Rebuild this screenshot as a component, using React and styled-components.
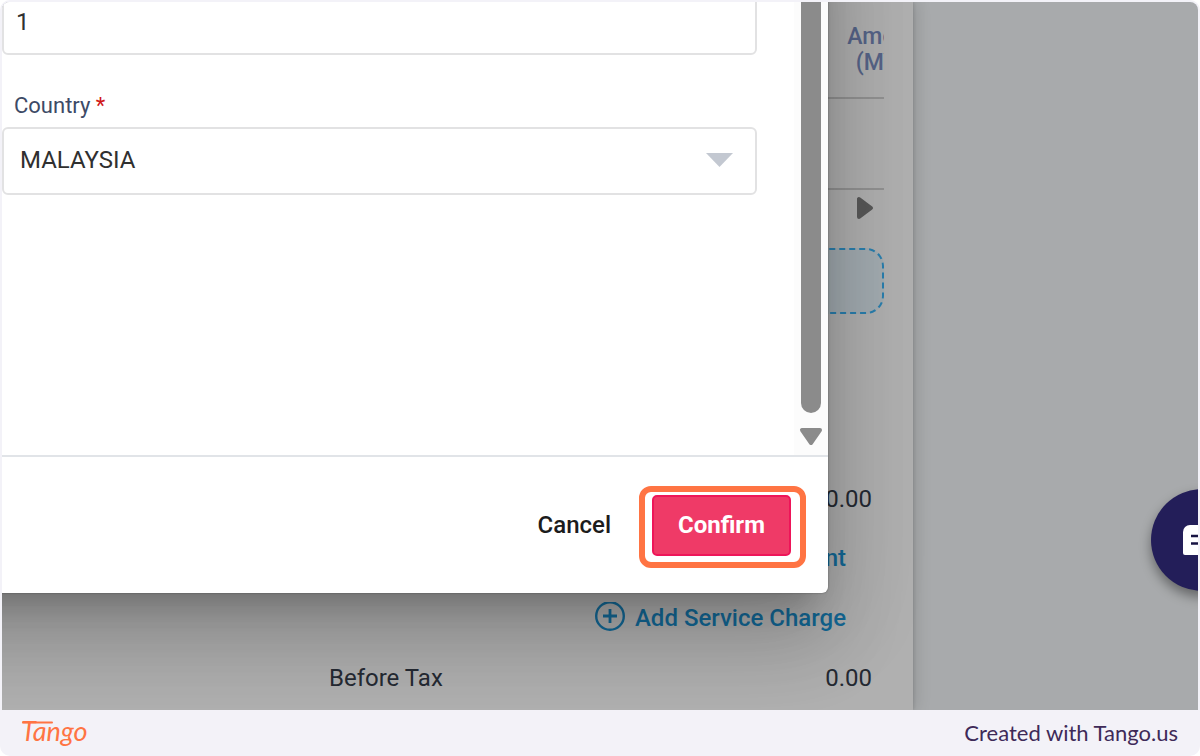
import React from 'react';
import styled, { createGlobalStyle } from 'styled-components';

const GlobalStyle = createGlobalStyle`
  *, *::before, *::after { box-sizing: border-box; }
  body { margin: 0; background: #fff; font-family: Roboto, "Liberation Sans", sans-serif; }
  button, input, select { font: inherit; }
`;

const Frame = styled.div`
  min-height: 100vh;
  display: flex;
  flex-direction: column;
  padding: 2px 2px 0;
  background: #f3f2f8;
  border-radius: 10px;
  overflow: hidden;
`;

const Scene = styled.main`
  position: relative;
  flex: 1;
  display: flex;
  background: #a8aaac;
  border-radius: 8px 8px 0 0;
  overflow: hidden;
`;

const Sheet = styled.section`
  flex: 1;
  min-width: 0;
  margin-right: 285px;
  padding: 0 29px 2px 31px;
  background: #b0b0b0;
  box-shadow: 1px 0 3px rgba(0, 0, 0, 0.12), 2px 0 16px rgba(0, 0, 0, 0.14);
`;

const TableClip = styled.div`
  overflow: hidden;
`;

const Items = styled.table`
  width: calc(100% + 59px);
  border-collapse: collapse;
  table-layout: fixed;
`;

const HeadCell = styled.th`
  width: ${(p) => (p.$narrow ? '110px' : 'auto')};
  height: 96px;
  padding: 0;
  border-bottom: 2px solid #929292;
  color: #566488;
  font-size: 23px;
  font-weight: 500;
  line-height: 26px;
`;

const BodyCell = styled.td`
  height: 91px;
  border-bottom: 2px solid #929292;
`;

const ScrollHint = styled.div`
  display: flex;
  justify-content: flex-end;
  align-items: center;
  height: 36px;
  padding-right: 10px;
`;

const AddLine = styled.div`
  height: 66px;
  margin: 22px 0 156px;
  border: 2px dashed #2a7fae;
  border-radius: 18px;
  background: #a3acb1;
`;

const TotalRow = styled.div`
  display: flex;
  justify-content: flex-end;
  align-items: center;
  height: ${(p) => (p.$first ? '58px' : '60px')};
  padding-right: ${(p) => (p.$action ? '38px' : '12px')};
  color: #252a33;
  font-size: 24px;
  line-height: 28px;
`;

const TotalLabel = styled.span`
  margin-right: auto;
  padding-left: 296px;
`;

const TextAction = styled.button`
  display: flex;
  align-items: center;
  gap: 10px;
  padding: 0;
  border: 0;
  background: none;
  color: #146a98;
  font-weight: 500;
`;

const Dialog = styled.section`
  position: absolute;
  top: -100px;
  left: -100px;
  right: 370px;
  padding: 100px 0 0 100px;
  background: #fff;
  border-radius: 6px;
  box-shadow:
    0 0 2px rgba(0, 0, 0, 0.4),
    0 22px 30px -14px rgba(0, 0, 0, 0.2),
    0 48px 76px 6px rgba(0, 0, 0, 0.14),
    0 18px 92px 16px rgba(0, 0, 0, 0.12);
`;

const DialogBody = styled.div`
  display: flex;
  height: 453px;
  overflow: hidden;
`;

const Fields = styled.div`
  flex: 1;
  min-width: 0;
  padding-right: 37px;
`;

const FieldInput = styled.input`
  display: block;
  width: 100%;
  height: 68px;
  margin-top: -15px;
  padding: 2px 12px 0;
  border: 2px solid #e2e2e3;
  border-radius: 6px;
  background: #fff;
  color: #303030;
  font-size: 24px;
`;

const FieldLabel = styled.label`
  display: block;
  margin: 37px 0 7px;
  padding-left: 12px;
  color: #3d4a66;
  font-size: 22px;
  line-height: 28px;
`;

const Required = styled.span`
  color: #d01818;
`;

const SelectBox = styled.div`
  position: relative;
`;

const FieldSelect = styled.select`
  display: block;
  appearance: none;
  width: 100%;
  height: 68px;
  padding: 0 48px 2px 16px;
  border: 2px solid #e2e2e3;
  border-radius: 6px;
  background: #fff;
  color: #303030;
  font-size: 24px;
`;

const Caret = styled.svg`
  position: absolute;
  top: 26px;
  right: 24px;
  pointer-events: none;
`;

const ScrollTrack = styled.div`
  display: flex;
  flex-direction: column;
  align-items: center;
  gap: 14px;
  width: 34px;
  padding-bottom: 9px;
  background: #fcfcfc;
`;

const ScrollThumb = styled.div`
  flex: 1;
  width: 20px;
  border-radius: 0 0 10px 10px;
  background: #8b8b8b;
`;

const DialogActions = styled.footer`
  display: flex;
  justify-content: flex-end;
  align-items: center;
  gap: 28px;
  padding: 29px 22px 25px;
  border-top: 2px solid #e1e4e8;
`;

const CancelButton = styled.button`
  padding: 0 0 4px;
  border: 0;
  background: none;
  color: #1c1c1c;
  font-size: 24px;
  font-weight: 500;
  line-height: 28px;
`;

const Highlight = styled.div`
  padding: 3px 9px 6px 7px;
  border: 6px solid #ff7443;
  border-radius: 12px;
`;

const ConfirmButton = styled.button`
  display: block;
  width: 139px;
  height: 61px;
  padding: 0 0 2px;
  border: 2px solid #ee1559;
  border-radius: 5px;
  background: #ef3a67;
  color: #fff;
  font-size: 24px;
  font-weight: 700;
`;

const ChatButton = styled.button`
  position: absolute;
  right: -55px;
  bottom: 119px;
  display: grid;
  place-items: center;
  width: 102px;
  height: 102px;
  padding: 0;
  border: 0;
  border-radius: 50%;
  background: #231e59;
  box-shadow: 0 6px 12px rgba(0, 0, 0, 0.4);
`;

const Brandbar = styled.footer`
  display: flex;
  justify-content: space-between;
  align-items: center;
  height: 46px;
  padding: 0 20px 0 19px;
`;

const Wordmark = styled.a`
  display: block;
  height: 40px;
`;

const WordmarkText = styled.text`
  fill: #ff7443;
  font-family: Lato, sans-serif;
  font-size: 27px;
  font-style: italic;
  font-weight: 400;
`;

const Credit = styled.a`
  color: #3e2a58;
  font-family: Lato, sans-serif;
  font-size: 22px;
  line-height: 28px;
  text-decoration: none;
`;

const PlusCircle = () => (
  <svg width="32" height="32" viewBox="0 0 32 32" fill="none" stroke="currentColor" strokeWidth="2.4" aria-hidden="true">
    <circle cx="17" cy="14" r="13.8" />
    <path d="M17 7v14M10 14h14" strokeWidth="2.8" />
  </svg>
);

export default function App() {
  return (
    <Frame>
      <GlobalStyle />
      <Scene>
        <Sheet>
          <TableClip>
            <Items>
              <thead>
                <tr>
                  <HeadCell />
                  <HeadCell $narrow>Amount<br />(MYR)</HeadCell>
                </tr>
              </thead>
              <tbody>
                <tr>
                  <BodyCell />
                  <BodyCell />
                </tr>
              </tbody>
            </Items>
          </TableClip>
          <ScrollHint>
            <svg width="18" height="24" viewBox="0 0 18 24" aria-hidden="true">
              <path d="M3 3v18L15 12Z" fill="#585858" stroke="#585858" strokeWidth="4" strokeLinejoin="round" />
            </svg>
          </ScrollHint>
          <AddLine />
          <TotalRow $first>0.00</TotalRow>
          <TotalRow $action>
            <TextAction type="button"><PlusCircle />Add Discount</TextAction>
          </TotalRow>
          <TotalRow $action>
            <TextAction type="button"><PlusCircle />Add Service Charge</TextAction>
          </TotalRow>
          <TotalRow><TotalLabel>Before Tax</TotalLabel>0.00</TotalRow>
        </Sheet>

        <ChatButton type="button" aria-label="Open chat">
          <svg width="40" height="32" viewBox="0 0 40 32" aria-hidden="true">
            <path d="M8 1h24a7 7 0 0 1 7 7v16a7 7 0 0 1-7 7H3a2 2 0 0 1-2-2V8a7 7 0 0 1 7-7Z" fill="#fff" />
            <path d="M9 12h22M9 19.500h22" stroke="#171342" strokeWidth="2.600" />
          </svg>
        </ChatButton>

        <Dialog role="dialog" aria-label="Address">
          <DialogBody>
            <Fields>
              <FieldInput aria-label="Address line" defaultValue="1" />
              <FieldLabel htmlFor="country">Country <Required>*</Required></FieldLabel>
              <SelectBox>
                <FieldSelect id="country" defaultValue="MALAYSIA">
                  <option>MALAYSIA</option>
                </FieldSelect>
                <Caret width="27" height="14" viewBox="0 0 27 14" aria-hidden="true">
                  <path d="M0 0h27L13.500 14Z" fill="#c3c8d1" />
                </Caret>
              </SelectBox>
            </Fields>
            <ScrollTrack>
              <ScrollThumb />
              <svg width="24" height="19" viewBox="0 0 24 19" aria-hidden="true">
                <path d="M3 3h18L12 16Z" fill="#8b8b8b" stroke="#8b8b8b" strokeWidth="4" strokeLinejoin="round" />
              </svg>
            </ScrollTrack>
          </DialogBody>
          <DialogActions>
            <CancelButton type="button">Cancel</CancelButton>
            <Highlight>
              <ConfirmButton type="button">Confirm</ConfirmButton>
            </Highlight>
          </DialogActions>
        </Dialog>
      </Scene>
      <Brandbar>
        <Wordmark href="#tango">
          <svg width="70" height="40" viewBox="0 0 70 40">
            <WordmarkText x="0" y="28">Tango</WordmarkText>
            <path d="M2 9.500H31" stroke="#ff7443" strokeWidth="2" strokeLinecap="round" />
          </svg>
        </Wordmark>
        <Credit href="#created">Created with Tango.us</Credit>
      </Brandbar>
    </Frame>
  );
}
